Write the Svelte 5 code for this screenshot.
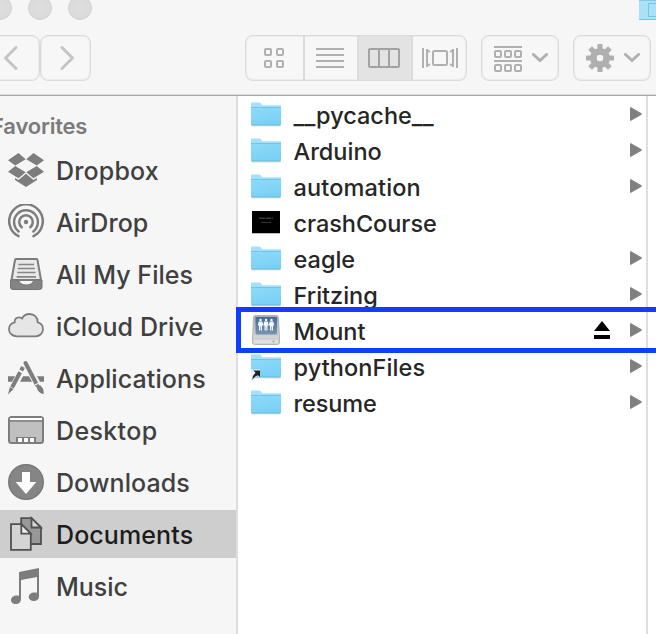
<script lang="ts">
	type Entry = { name: string; icon: string; spacing: number };

	const favorites: Entry[] = [
		{ name: 'Dropbox', icon: 'dropbox', spacing: 0.15 },
		{ name: 'AirDrop', icon: 'airdrop', spacing: 0.05 },
		{ name: 'All My Files', icon: 'files', spacing: 0.05 },
		{ name: 'iCloud Drive', icon: 'cloud', spacing: 0.1 },
		{ name: 'Applications', icon: 'apps', spacing: 0.1 },
		{ name: 'Desktop', icon: 'desktop', spacing: 0.35 },
		{ name: 'Downloads', icon: 'downloads', spacing: 0.05 },
		{ name: 'Documents', icon: 'documents', spacing: 0.1 },
		{ name: 'Music', icon: 'music', spacing: 0 }
	];

	const files: Entry[] = [
		{ name: '__pycache__', icon: 'folder', spacing: 0 },
		{ name: 'Arduino', icon: 'folder', spacing: 0 },
		{ name: 'automation', icon: 'folder', spacing: 0.15 },
		{ name: 'crashCourse', icon: 'slide', spacing: -0.05 },
		{ name: 'eagle', icon: 'folder', spacing: 0 },
		{ name: 'Fritzing', icon: 'folder', spacing: 0 },
		{ name: 'Mount', icon: 'drive', spacing: 0 },
		{ name: 'pythonFiles', icon: 'alias', spacing: 0.1 },
		{ name: 'resume', icon: 'folder', spacing: -0.1 }
	];

	let selected = $state('Documents');
	let marked = $state('Mount');
</script>

<div class="finder">
	<header>
		<div class="titlebar">
			<div class="lights"><i></i><i></i><i></i></div>
			<svg class="proxy" width="17" height="21" viewBox="0 0 17 21">
				<path d="M0 0H17V20H0Z" fill="#a9e2f8" />
				<path d="M0 19.5H17" stroke="#85bfd6" />
				<path d="M0 .5H17" stroke="#82cbe8" />
				<path d="M17 3.5H9.5V16.5H17" fill="none" stroke="#78c5e3" />
			</svg>
		</div>
		<div class="toolbar">
			<button class="back" aria-label="Back">
				<svg width="14" height="26" viewBox="0 0 14 26"><path d="M12 2.500L1.500 13L12 23.500" class="arrow" /></svg>
			</button>
			<button class="forward" aria-label="Forward">
				<svg width="14" height="26" viewBox="0 0 14 26"><path d="M2 2.500L12.500 13L2 23.500" class="arrow" /></svg>
			</button>
			<div class="views">
				<span>
					<svg width="20" height="20" viewBox="0 0 20 20" class="line">
						<rect x="1" y="1" width="6" height="6" rx="1" />
						<rect x="13" y="1" width="6" height="6" rx="1" />
						<rect x="1" y="13" width="6" height="6" rx="1" />
						<rect x="13" y="13" width="6" height="6" rx="1" />
					</svg>
				</span>
				<span>
					<svg width="28" height="20" viewBox="0 0 28 20" class="line"><path d="M0 1H28M0 7H28M0 13H28M0 19H28" /></svg>
				</span>
				<span class="on">
					<svg width="32" height="20" viewBox="0 0 32 20" class="line dark">
						<rect x="1" y="1" width="30" height="18" rx="1" />
						<path d="M11 1V19M21 1V19" />
					</svg>
				</span>
				<span>
					<svg width="36" height="20" viewBox="0 0 36 20" class="line">
						<path d="M1 0V20M35 0V20" />
						<rect x="11" y="3" width="14" height="14" rx="1.500" />
						<path d="M5 1V19M5 2L8 4M5 18L8 16M31 1V19M31 2L28 4M31 18L28 16" />
					</svg>
				</span>
			</div>
			<button class="menu arrange" aria-label="Arrange">
				<svg width="28" height="26" viewBox="0 0 28 26" class="line">
					<path d="M0 1H28M0 15H28" />
					{#each [5, 19] as y}
						{#each [1, 11, 21] as x}
							<rect {x} {y} width="6" height="6" rx="1" />
						{/each}
					{/each}
				</svg>
				<svg width="16" height="10" viewBox="0 0 16 10"><path d="M1.500 1.500L8 7.500L14.500 1.500" class="chevron" /></svg>
			</button>
			<button class="menu" aria-label="Action">
				<svg width="28" height="28" viewBox="-14 -14 28 28">
					{#each [0, 45, 90, 135] as angle}
						<rect x="-2.600" y="-14" width="5.200" height="28" rx=".8" fill="#afafaf" transform="rotate({angle})" />
					{/each}
					<circle r="10" fill="#afafaf" />
					<circle r="3.300" fill="#f7f7f7" />
				</svg>
				<svg width="16" height="10" viewBox="0 0 16 10"><path d="M1.500 1.500L8 7.500L14.500 1.500" class="chevron" /></svg>
			</button>
		</div>
	</header>

	<main>
		<aside>
			<h2>Favorites</h2>
			<ul>
				{#each favorites as item}
					<li class:selected={selected === item.name}>
						<svg width="36" height="36" viewBox="0 0 36 36">
							{#if item.icon === 'dropbox'}
								<g fill="#7d7d7d">
									<path d="M0 8.300L10.500 1L17.700 7.300L7.300 13.600ZM36 8.300L25.500 1L18.300 7.300L28.700 13.600Z" />
									<path d="M0 19.700L7.300 14L17.700 20.300L10.500 26.300ZM36 19.700L28.700 14L18.300 20.300L25.500 26.300Z" />
									<path d="M7 26L10.500 28L18 21.800L25.500 28L29 26V28L18 35L7 28Z" />
								</g>
							{:else if item.icon === 'airdrop'}
								<g fill="none" stroke="#7d7d7d" stroke-width="2.500" stroke-linecap="round">
									<path d="M10.500 32.200A16.800 16.800 0 1 1 25.500 32.200" />
									<path d="M10.600 27.400A11.900 11.900 0 1 1 25.400 27.400" />
									<path d="M13.700 23.200A6.800 6.800 0 1 1 22.300 23.200" />
								</g>
								<circle cx="18" cy="18" r="2.200" fill="#7d7d7d" />
							{:else if item.icon === 'files'}
								<path d="M8 3H28.500Q29.300 3 29.500 4L33 24H3.500L7 4Q7.200 3 8 3Z" fill="#e9e9e9" stroke="#7d7d7d" stroke-width="2" />
								<path d="M10.500 8.500H26M9.800 12.500H26.800M9.200 16.500H27.500M8.600 20.800H28" stroke="#858585" stroke-width="1.700" />
								<path d="M2.500 24H9C12 24 11 29 18.200 29S24.500 24 27.500 24H34V31Q34 33.500 31.500 33.500H5Q2.500 33.500 2.500 31Z" fill="#848484" stroke="#747474" />
							{:else if item.icon === 'cloud'}
								<path
									d="M9 28.300C4.300 28.300 1 25.200 1 21.200C1 17.700 3.500 15 6.700 14.300C6.200 11.300 8.500 9.300 11 9.300C12.300 9.300 13.300 9.700 14 10.500C15.400 7.800 18 6 21.500 6C26.300 6 30 9.800 29.700 14.300C33 15.100 35 17.800 35 21.200C35 25.200 31.800 28.300 27.500 28.300Z"
									fill="#e6e6e6"
									stroke="#7d7d7d"
									stroke-width="1.800"
								/>
							{:else if item.icon === 'apps'}
								<path d="M0 16.300H7L4 21.700H0ZM15 16.300H21L24 21.700H12ZM29 16.300H36V21.700H32Z" fill="#7d7d7d" />
								<g fill="none" stroke="#7d7d7d" stroke-width="4">
									<path d="M17.500 3L29 25" stroke-linecap="round" />
									<path d="M15 7L13.200 10.500M12.300 12L4 27.500" />
								</g>
								<path d="M10.500 10.500L15.200 13.200M27 25L31.500 22.700" stroke="#f6f6f6" stroke-width="1.200" />
								<path d="M1.800 27L5.600 29L0 34.600ZM28.500 27L32 25L35 28.500Q36 32 35.500 34.300Q30 33 28.500 27Z" fill="#7d7d7d" />
							{:else if item.icon === 'desktop'}
								<rect x="1" y="5" width="34" height="26" rx="2.500" fill="#c0c0c0" stroke="#7d7d7d" stroke-width="2" />
								<path d="M2 6H34V8H2Z" fill="#fff" />
								<path d="M1 9H35" stroke="#7d7d7d" stroke-width="1.600" />
								<path d="M8 25H28V31H8Z" fill="#7d7d7d" />
								<path d="M10 26H14V30H10ZM16 26H20V30H16ZM22 26H26V30H22Z" fill="#fff" />
							{:else if item.icon === 'downloads'}
								<circle cx="18" cy="18" r="17.300" fill="#858585" stroke="#777" stroke-width="1.400" />
								<path d="M14 8H22V18H28.300L18 30L7.700 18H14Z" fill="#fff" />
							{:else if item.icon === 'documents'}
								<g stroke="#515151" stroke-width="1.800">
									<path d="M13.200 2.200H23.500L33 11.500V28H13.200Z" fill="#989898" />
									<path d="M23.500 2.200V11.500H33Z" fill="#d7d7d7" />
									<path d="M3 8.200H13.300L22.800 17.700V33.800H3Z" fill="#d4d4d4" />
									<path d="M13.300 8.200V17.700H22.800Z" fill="#eee" />
								</g>
							{:else}
								<path d="M11 4L31 0V28.500C31 31 28.800 33 25.700 33C22.700 33 20.700 31.300 20.700 29C20.700 26 24 23.500 29 24.700V9L13 12V31C13 34 10.800 36 7.700 36C4.800 36 3 34.500 3 32.200C3 29 6.500 26.800 11 27.700Z" fill="#7d7d7d" />
							{/if}
						</svg>
						<span style:letter-spacing="{item.spacing}px">{item.name}</span>
					</li>
				{/each}
			</ul>
		</aside>

		<section>
			<ul>
				{#each files as file}
					<li class:marked={marked === file.name}>
						<svg width="30" height="30" viewBox="0 0 30 30">
							{#if file.icon === 'slide'}
								<path d="M1 4H29V27H1Z" fill="#bbb" />
								<path d="M1 4H29V26H1Z" fill="#000" />
								<path d="M8 11.200H22" stroke="#555" stroke-dasharray="6 .5" />
								<path d="M10 15.500H20" stroke="#333" />
							{:else if file.icon === 'drive'}
								<defs>
									<linearGradient id="case" x2="0" y2="1">
										<stop offset="0" stop-color="#a9adb1" />
										<stop offset="1" stop-color="#e0e2e3" />
									</linearGradient>
									<linearGradient id="label" x2="0" y2="1">
										<stop offset="0" stop-color="#426b9a" />
										<stop offset="1" stop-color="#7895b2" />
									</linearGradient>
								</defs>
								<path d="M4 .5H26Q27.300 .5 27.500 3L28.500 23V27.500Q28.500 29.500 26.500 29.500H3.500Q1.500 29.500 1.500 27.500V23L2.500 3Q2.700 .5 4 .5Z" fill="url(#case)" stroke="#a7aaad" stroke-width=".8" />
								<path d="M2 24H28V27Q28 29 26 29H4Q2 29 2 27Z" fill="#dfe1e2" stroke="#b4b7b9" stroke-width=".6" />
								<rect x="4.500" y="2" width="21.500" height="17.500" rx="1" fill="url(#label)" />
								{#each [9.500, 15, 20.500] as x}
									<circle cx={x} cy="4.900" r="1.200" fill="#fff" />
									<path d="M{x - 1.800} 6.500H{x + 1.800}L{x + 2.700} 10.500H{x + 1.500}V15.500H{x + 0.3}V11.500H{x - 0.3}V15.500H{x - 1.500}V10.500H{x - 2.700}Z" fill="#f6f9fc" />
								{/each}
								<circle cx="22.500" cy="26.500" r="1" fill="#8fb67a" />
							{:else}
								<defs>
									<linearGradient id="folder-{file.name}" x2=".3" y2="1">
										<stop offset="0" stop-color="#8edbf9" />
										<stop offset="1" stop-color="#79d0f6" />
									</linearGradient>
								</defs>
								<path d="M.5 26.800H29.500" stroke="#c4ccd0" />
								<path d="M0 4.500Q0 3.500 1 3.500H8.500Q9.300 3.500 9.800 4.200L11.300 6.200H29Q30 6.200 30 7.200V12H0Z" fill="#a3e0fb" />
								<path d="M0 8.500H30V25.200Q30 26.300 29 26.300H1Q0 26.300 0 25.200Z" fill="url(#folder-{file.name})" />
								<path d="M0 8.500H30" stroke="#6dc6ec" />
								<path d="M.5 25.900H29.500" stroke="#65b9dc" stroke-width=".8" />
								{#if file.icon === 'alias'}
									<path d="M0 18.500H9V27L6.700 25Q3.500 26.500 1.500 29.500H0Z" fill="#e9f3f7" />
									<path d="M2.300 19.500H9V26.300L6.900 24.200Q3.500 25.500 1.500 28.800Q1 25 4.600 21.800Z" fill="#222" />
								{/if}
							{/if}
						</svg>
						<span class="name" style:letter-spacing="{file.spacing}px">{file.name}</span>
						{#if file.icon === 'drive'}
							<svg class="eject" width="16" height="18" viewBox="0 0 16 18"><path d="M8 0L16 10H0ZM0 14H16V18H0Z" /></svg>
						{/if}
						{#if file.icon !== 'slide'}
							<svg width="12" height="14" viewBox="0 0 12 14"><path d="M0 .5Q0 0 1 .3L11.500 6.300Q12 7 11.500 7.700L1 13.700Q0 14 0 13.500Z" fill="#808080" /></svg>
						{/if}
					</li>
				{/each}
			</ul>
		</section>
	</main>
</div>

<style>
	:global(body) {
		margin: 0;
		overflow: hidden;
	}

	.finder {
		display: flex;
		flex-direction: column;
		width: 656px;
		height: 634px;
		overflow: hidden;
		background: #fff;
		font-family: Inter, 'Liberation Sans', sans-serif;
	}

	header {
		box-sizing: border-box;
		flex: none;
		height: 96px;
		background: #f6f6f6;
		border-bottom: 1px solid #ababab;
		box-shadow: inset 0 -1px #dadada;
	}

	.titlebar {
		display: flex;
		justify-content: space-between;
		height: 35px;
	}

	.lights {
		display: flex;
		gap: 16px;
		margin: -4px 0 0 -12px;
	}

	.lights i {
		box-sizing: border-box;
		width: 24px;
		height: 24px;
		border: 1px solid #d0d0d0;
		border-radius: 50%;
		background: radial-gradient(#dedede, #dadada);
	}

	.toolbar {
		display: flex;
		height: 46px;
		margin-left: -12px;
	}

	button,
	.views {
		box-sizing: border-box;
		display: flex;
		flex: none;
		align-items: center;
		padding: 0;
		border: 1px solid #dadada;
		border-radius: 8px;
		background: #f7f7f7;
		box-shadow: inset 0 0 0 1px #ececec;
	}

	.back {
		width: 52px;
		padding-left: 15px;
	}

	.forward {
		width: 51px;
		padding-left: 19px;
	}

	.views {
		width: 222px;
		margin-left: 154px;
		overflow: hidden;
	}

	.views span {
		display: flex;
		align-items: center;
		justify-content: center;
		box-sizing: border-box;
		width: 54px;
		height: 100%;
		padding-right: 2px;
		border-left: 2px solid #dcdcdc;
	}

	.views span:first-child {
		width: 57px;
		padding-right: 1px;
		border-left: none;
	}

	.views span:last-child {
		padding: 0 0 0 2px;
	}

	.views .on {
		background: #e3e3e3;
	}

	.menu {
		width: 78px;
		gap: 10px;
		margin-left: 14px;
		padding-left: 12px;
	}

	.arrange svg:first-child {
		margin-top: 2px;
	}

	.arrow,
	.chevron {
		fill: none;
		stroke: #c4c4c4;
		stroke-width: 3;
		stroke-linecap: round;
	}

	.chevron {
		stroke: #b0b0b0;
	}

	.line {
		fill: none;
		stroke: #b0b0b0;
		stroke-width: 2;
	}

	.dark {
		stroke: #a2a2a2;
	}

	main {
		display: flex;
		flex: 1;
	}

	aside {
		width: 236px;
		background: #f6f6f6;
		border-right: 2px solid #dedede;
	}

	h2 {
		height: 30px;
		margin: 15px 0 5px -9px;
		font-size: 22px;
		font-weight: 600;
		letter-spacing: -0.2px;
		line-height: 30px;
		color: #7b7b7b;
	}

	ul {
		margin: 0;
		padding: 0;
		list-style: none;
	}

	li {
		display: flex;
		align-items: center;
		white-space: nowrap;
	}

	aside li {
		height: 48px;
		margin-bottom: 4px;
		padding-left: 8px;
		color: #404040;
		font-size: 25px;
		font-weight: 450;
	}

	aside li span {
		margin-left: 12px;
		padding-top: 2px;
	}

	aside .selected {
		background: #cecece;
		color: #1c1c1c;
		font-weight: 500;
	}

	section {
		width: 408px;
		border-right: 2px solid #dedede;
	}

	section li {
		box-sizing: border-box;
		height: 36px;
		padding: 0 4px 0 13px;
		color: #262626;
		font-size: 23.5px;
		font-weight: 450;
	}

	.name {
		flex: 1;
		margin-left: 12.5px;
		padding-top: 3px;
	}

	.eject {
		margin-right: 20px;
	}

	/* outline spans the row and runs out past the window edge */
	.marked {
		position: relative;
	}

	.marked::after {
		content: '';
		position: absolute;
		top: -5px;
		left: -2px;
		width: 430px;
		height: 36px;
		border: 5px solid #103ffb;
	}
</style>
